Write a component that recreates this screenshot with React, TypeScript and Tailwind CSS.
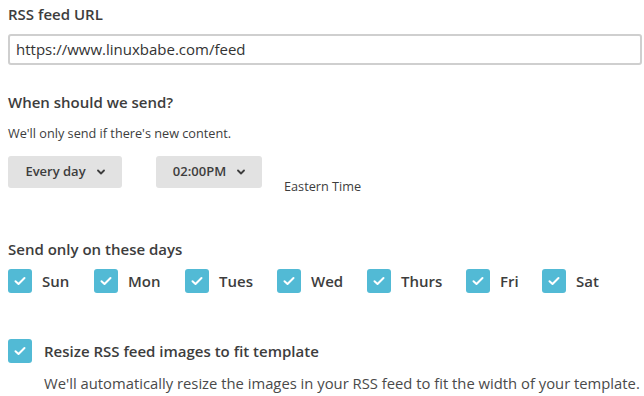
import React from "react";

const days = [
  { name: "Sun", w: "w-[86px]" },
  { name: "Mon", w: "w-[91px]" },
  { name: "Tues", w: "w-[92px]" },
  { name: "Wed", w: "w-[90px]" },
  { name: "Thurs", w: "w-[99px]" },
  { name: "Fri", w: "w-[76px]" },
  { name: "Sat", w: "" },
];

const Check: React.FC = () => (
  <span className="flex h-6 w-6 shrink-0 items-center justify-center rounded-[3px] bg-[#52bad5]">
    <svg width="12" height="10" viewBox="0 0 12 10" fill="none">
      <path d="M1.5 5.2l3 2.8L10.5 2" stroke="white" strokeWidth="2" strokeLinecap="round" strokeLinejoin="round" />
    </svg>
  </span>
);

const Chevron: React.FC = () => (
  <svg width="8" height="6" viewBox="0 0 8 6" fill="none">
    <path d="M1 1.5l3 3 3-3" stroke="#3d3d3d" strokeWidth="1.8" strokeLinecap="round" strokeLinejoin="round" />
  </svg>
);

const Dropdown: React.FC<{ label: string; width: string }> = ({ label, width }) => (
  <button className={`flex h-8 items-center justify-center gap-[11px] rounded-[3px] bg-[#e2e2e2] text-[13px] font-semibold text-[#3d3d3d] ${width}`}>
    {label}
    <Chevron />
  </button>
);

export default function App() {
  return (
    <div className="h-[396px] w-[644px] bg-white px-2 pt-1 font-['Open_Sans',sans-serif] text-[#3d3d3d]">
      <div className="text-[15px] font-semibold leading-5">RSS feed URL</div>
      <div className="mt-[10px] flex h-[31px] w-[634px] items-center rounded-[3px] border-2 border-[#cfcfcf] px-[6px] text-[15px] text-[#333]">
        https://www.linuxbabe.com/feed
      </div>

      <div className="mt-[27px] text-[15px] font-semibold leading-5">When should we send?</div>
      <div className="mt-3 text-[12.7px] leading-[18px]">We'll only send if there's new content.</div>

      <div className="mt-[14px] flex items-start">
        <Dropdown label="Every day" width="w-[114px]" />
        <div className="ml-[34px]">
          <Dropdown label="02:00PM" width="w-[106px]" />
        </div>
        <div className="ml-[22px] mt-[21px] text-[12.7px] leading-[18px]">Eastern Time</div>
      </div>

      <div className="mt-[44px] text-[15px] font-semibold leading-5">Send only on these days</div>
      <div className="mt-[10px] flex items-center">
        {days.map((d) => (
          <label key={d.name} className={`flex items-center gap-[10px] text-[15px] font-semibold ${d.w}`}>
            <Check />
            {d.name}
          </label>
        ))}
      </div>

      <div className="mt-[46px] flex items-center gap-3">
        <Check />
        <span className="text-[15px] font-semibold">Resize RSS feed images to fit template</span>
      </div>
      <div className="ml-9 mt-[10px] whitespace-nowrap text-[14.8px] leading-5 text-[#4a4a4a]">
        We'll automatically resize the images in your RSS feed to fit the width of your template.
      </div>
    </div>
  );
}
